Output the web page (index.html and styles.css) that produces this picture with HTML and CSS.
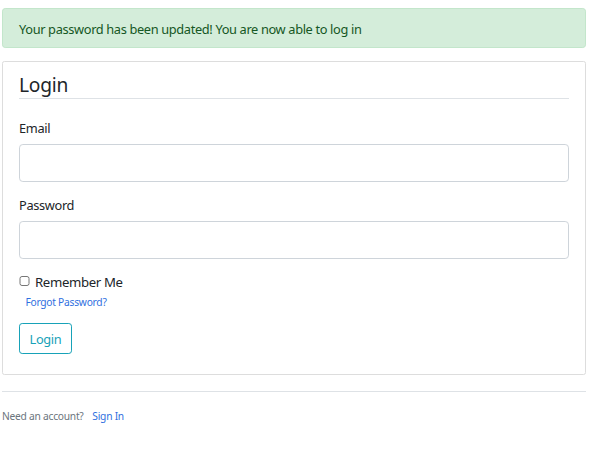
FILE: index.html
```html
<!DOCTYPE html>
<html lang="en">
<head>
<meta charset="utf-8">
<title>Login</title>
<link rel="stylesheet" href="styles.css">
</head>
<body>
<main class="page">
  <div class="alert">Your password has been updated! You are now able to log in</div>
  <div class="content-section">
    <form class="login-form">
      <fieldset class="fieldset">
        <legend class="legend">Login</legend>
        <div class="form-group">
          <label class="label" for="email">Email</label>
          <input class="form-control" id="email" type="email">
        </div>
        <div class="form-group">
          <label class="label" for="password">Password</label>
          <input class="form-control" id="password" type="password">
        </div>
        <div class="form-check">
          <input class="check-input" id="remember" type="checkbox">
          <label class="check-label" for="remember">Remember Me</label>
        </div>
      </fieldset>
      <div class="forgot-row"><small class="forgot"><a class="link" href="#">Forgot Password?</a></small></div>
      <div class="form-group">
        <button class="btn-outline" type="button">Login</button>
      </div>
    </form>
  </div>
  <div class="footer-row">
    <small class="muted">Need an account? <a class="link signin" href="#">Sign In</a></small>
  </div>
</main>
</body>
</html>
```

FILE: styles.css
```css
* { box-sizing: border-box; }
html, body { margin: 0; padding: 0; background: #fff; }
body {
  font-family: "Noto Sans", "Open Sans", "Liberation Sans", sans-serif;
  font-size: 12.8px;
  line-height: 19.2px;
  letter-spacing: -0.35px;
  color: #212529;
}
.page {
  width: 584px;
  margin: 8px 0 0 2px;
}
.alert {
  background: #d4edda;
  border: 1px solid #c3e6cb;
  color: #155724;
  border-radius: 3.2px;
  padding: 10.6px 16px 8.6px;
  height: 40px;
  margin-bottom: 13px;
}
.content-section {
  background: #fff;
  border: 1px solid #dddddd;
  border-radius: 2.4px;
  padding: 8px 16px;
  margin-bottom: 16px;
}
.fieldset {
  border: 0;
  margin: 0;
  padding: 0;
  min-width: 0;
}
.legend {
  display: block;
  width: 100%;
  padding: 1px 0 0;
  font-size: 19.2px;
  line-height: 27px;
  letter-spacing: -0.2px;
  border-bottom: 1px solid #dee2e6;
  margin-bottom: 19.2px;
}
.form-group { margin-bottom: 12.8px; }
.label {
  display: block;
  padding-top: 1px;
  margin-bottom: 5.4px;
}
.form-control {
  display: block;
  width: 100%;
  height: 38.4px;
  border: 1px solid #ced4da;
  border-radius: 3.84px;
  background: #fff;
  font: inherit;
  padding: 6.4px 12.8px;
  outline: none;
}
.form-check {
  position: relative;
  padding-left: 16px;
  padding-top: 1px;
  display: block;
}
.check-input {
  position: absolute;
  left: 0;
  top: 4px;
  margin: 0;
  width: 10.5px;
  height: 10.5px;
}
.check-label { font-size: 13.2px; }
.forgot-row { line-height: 19.2px; margin-bottom: 11px; }
.forgot { font-size: 10.24px; margin-left: 6.4px; letter-spacing: -0.25px; }
.link { color: #2f6fe0; text-decoration: none; }
.btn-outline {
  display: inline-block;
  font: inherit;
  font-size: 12.8px;
  line-height: 19.2px;
  letter-spacing: -0.35px;
  color: #17a2b8;
  background: transparent;
  border: 1px solid #17a2b8;
  border-radius: 3.2px;
  padding: 5.6px 9.6px 3.6px;
  height: 30.4px;
}
.footer-row {
  border-top: 1px solid #dee2e6;
  padding-top: 13.8px;
}
.muted { color: #6c757d; font-size: 10.24px; letter-spacing: -0.25px; }
.signin { margin-left: 6.4px; }
```
